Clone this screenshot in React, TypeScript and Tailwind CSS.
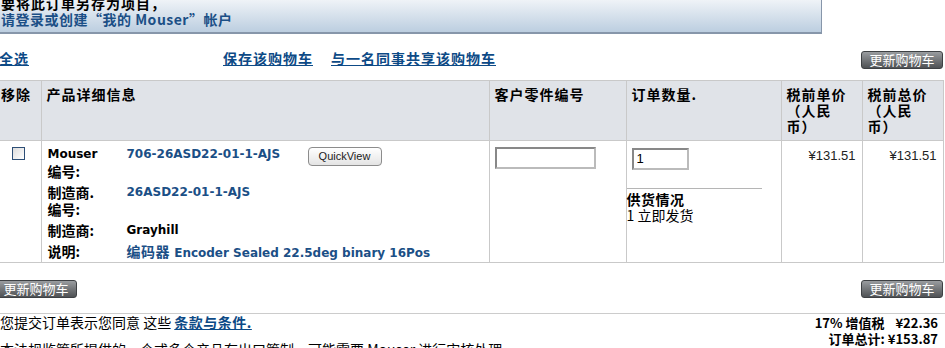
export default function App() {
  const cjk = { fontFamily: '"Noto Sans CJK SC", "DejaVu Sans", sans-serif' };
  const ver = { fontFamily: '"DejaVu Sans", "Noto Sans CJK SC", sans-serif' };
  const ars = { fontFamily: '"Liberation Sans", "Noto Sans CJK SC", sans-serif' };

  const UpdateBtn = () => (
    <button
      className="h-[18px] w-[82px] rounded-[3px] border border-[#3e4144] bg-gradient-to-b from-[#9a9da0] to-[#4f5255] text-[13px] leading-[16px] text-white"
      style={cjk}
    >
      更新购物车
    </button>
  );

  return (
    <div className="h-[348px] w-[945px] overflow-hidden bg-white text-black" style={cjk}>
      {/* sign-in banner */}
      <div className="h-[34px] w-[822px] overflow-hidden border-r border-b-2 border-[#8796aa] bg-gradient-to-b from-[#eff3f7] to-[#bccee0] pl-[1px]">
        <div className="-mt-[5px] text-[14px] font-bold leading-[16px] tracking-[1px]">要将此订单另存为项目，</div>
        <div className="text-[14px] font-bold leading-[16px] tracking-[0.5px] text-[#1b4f86]">
          请登录或创建“我的 Mouser”帐户
        </div>
      </div>

      {/* actions */}
      <div className="mt-[14px] flex h-[20px] items-center">
        <a className="-ml-[1px] text-[14px] font-bold tracking-[1px] text-[#0d4a86] underline">全选</a>
        <a className="ml-[194px] text-[14px] font-bold tracking-[1px] text-[#0d4a86] underline">保存该购物车</a>
        <a className="ml-[18px] text-[14px] font-bold tracking-[1px] text-[#0d4a86] underline">与一名同事共享该购物车</a>
        <div className="ml-auto mr-[2px]">
          <UpdateBtn />
        </div>
      </div>

      {/* cart table */}
      <table className="mt-[12px] w-[943px] table-fixed border-collapse text-[14px]">
        <colgroup>
          <col className="w-[41px]" />
          <col className="w-[448px]" />
          <col className="w-[137px]" />
          <col className="w-[155px]" />
          <col className="w-[81px]" />
          <col className="w-[81px]" />
        </colgroup>
        <thead>
          <tr className="h-[60px] bg-[#e0e3e8] align-top font-bold leading-[16px] tracking-[1px]">
            <th className="border border-l-0 border-[#c9c9c9] pl-[1px] pt-[5px] text-left">移除</th>
            <th className="border border-[#c9c9c9] pl-[5px] pt-[5px] text-left">产品详细信息</th>
            <th className="border border-[#c9c9c9] pl-[5px] pt-[5px] text-left">客户零件编号</th>
            <th className="border border-[#c9c9c9] pl-[5px] pt-[5px] text-left">订单数量.</th>
            <th className="border border-[#c9c9c9] pl-[5px] pt-[5px] text-left">
              税前单价
              <br />（人民
              <br />币）
            </th>
            <th className="border border-[#c9c9c9] pl-[5px] pt-[5px] text-left">
              税前总价
              <br />（人民
              <br />币）
            </th>
          </tr>
        </thead>
        <tbody>
          <tr className="h-[122px] align-top">
            <td className="border border-l-0 border-[#c9c9c9] pl-[12px] pt-[6px]">
              <div className="h-[13px] w-[13px] border border-[#2d4e76] bg-gradient-to-br from-[#dcdcdc] to-white" />
            </td>
            <td className="border border-[#c9c9c9] pl-[6px] pt-[5px]">
              <div className="grid grid-cols-[79px_181px_auto] text-[12px] leading-[17px]">
                <div className="font-bold" style={ver}>
                  Mouser
                  <div className="text-[14px] leading-[16px]" style={cjk}>编号:</div>
                </div>
                <div className="font-bold text-[#1b4f86]" style={ver}>706-26ASD22-01-1-AJS</div>
                <div>
                  <button
                    className="mt-[-1px] h-[19px] w-[74px] rounded-[4px] border border-[#8c8c8c] bg-gradient-to-b from-white to-[#e4e4e4] text-[11px] text-[#222]"
                    style={ars}
                  >
                    QuickView
                  </button>
                </div>

                <div className="mt-[5px] text-[14px] font-bold leading-[17px]">
                  制造商.
                  <br />
                  编号:
                </div>
                <div className="col-span-2 mt-[5px] font-bold text-[#1b4f86]" style={ver}>26ASD22-01-1-AJS</div>

                <div className="mt-[4px] text-[14px] font-bold leading-[17px]">制造商:</div>
                <div className="col-span-2 mt-[4px] font-bold text-black" style={ver}>Grayhill</div>

                <div className="mt-[4px] text-[14px] font-bold leading-[17px]">说明:</div>
                <div className="col-span-2 mt-[4px] font-bold text-[#1b4f86]" style={ver}>
                  <span className="text-[14px] tracking-[0.5px]" style={cjk}>编码器</span> Encoder Sealed 22.5deg binary 16Pos
                </div>
              </div>
            </td>
            <td className="border border-[#c9c9c9] pl-[5px] pt-[6px]">
              <input className="h-[22px] w-[101px] border-2 border-t-[#888] border-l-[#888] border-r-[#bbb] border-b-[#bbb] bg-white" />
            </td>
            <td className="border border-[#c9c9c9] pt-[6px]">
              <input
                defaultValue="1"
                className="ml-[5px] h-[22px] w-[57px] border-2 border-t-[#888] border-l-[#888] border-r-[#bbb] border-b-[#bbb] bg-white px-[3px] text-[13px]"
                style={ars}
              />
              <div className="mt-[18px] w-[135px] border-t border-[#b5b5b5] pt-[2px] text-[14px] leading-[16px]">
                <div className="font-bold tracking-[0.5px]">供货情况</div>
                <div>1 立即发货</div>
              </div>
            </td>
            <td className="border border-[#c9c9c9] pr-[6px] pt-[5px] text-right text-[13px] text-[#222]" style={ars}>
              ¥131.51
            </td>
            <td className="border border-[#c9c9c9] pr-[6px] pt-[5px] text-right text-[13px] text-[#222]" style={ars}>
              ¥131.51
            </td>
          </tr>
        </tbody>
      </table>

      {/* bottom buttons */}
      <div className="mt-[12px] flex">
        <div className="-ml-[5px]">
          <UpdateBtn />
        </div>
        <div className="ml-auto mr-[2px]">
          <UpdateBtn />
        </div>
      </div>

      {/* terms + totals */}
      <div className="mt-[14px] flex border-t border-[#cccccc]">
        <div className="text-[14px] leading-[17px]">
          您提交订单表示您同意 这些{" "}
          <a className="font-bold tracking-[0.5px] text-[#0d4a86] underline">条款与条件.</a>
          <div className="mt-[10px]">本法规监管所提供的一个或多个产品有出口管制，可能需要 Mouser 进行审核处理。</div>
        </div>
        <div className="ml-auto mr-[7px] pt-[1px] text-right text-[13px] font-bold leading-[16px]">
          <div>
            17% 增值税 <span className="ml-[8px]">¥22.36</span>
          </div>
          <div>订单总计: ¥153.87</div>
        </div>
      </div>
    </div>
  );
}
